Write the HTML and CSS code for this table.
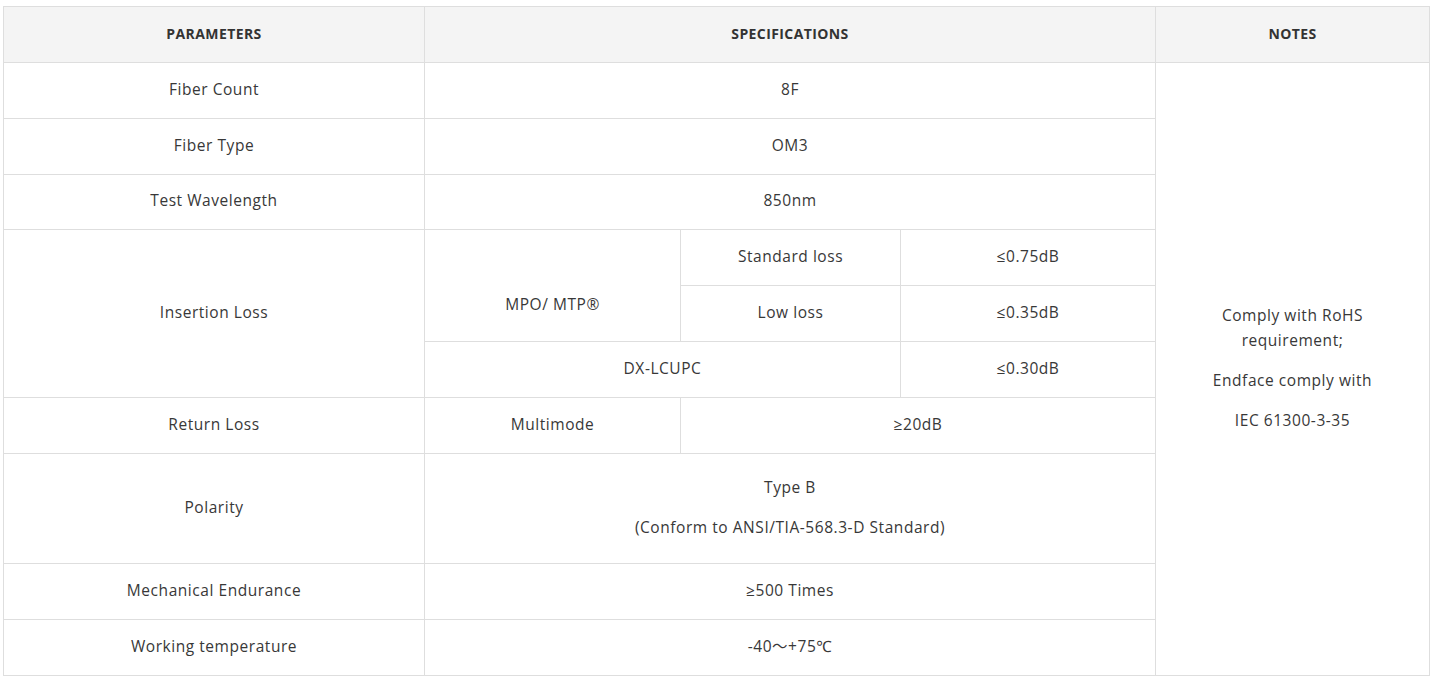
FILE: index.html
```html
<!DOCTYPE html>
<html lang="en">
<head>
<meta charset="utf-8">
<title>Specifications</title>
<link rel="stylesheet" href="styles.css">
</head>
<body>
<table class="spec">
  <colgroup>
    <col class="c1">
    <col class="c2">
    <col class="c3">
    <col class="c4">
    <col class="c5">
  </colgroup>
  <thead>
    <tr>
      <th>PARAMETERS</th>
      <th colspan="3">SPECIFICATIONS</th>
      <th>NOTES</th>
    </tr>
  </thead>
  <tbody>
    <tr>
      <td>Fiber Count</td>
      <td colspan="3">8F</td>
      <td rowspan="10" class="notes">
        <p>Comply with RoHS<br>requirement;</p>
        <p>Endface comply with</p>
        <p>IEC 61300-3-35</p>
      </td>
    </tr>
    <tr>
      <td>Fiber Type</td>
      <td colspan="3">OM3</td>
    </tr>
    <tr class="short">
      <td>Test Wavelength</td>
      <td colspan="3">850nm</td>
    </tr>
    <tr>
      <td rowspan="3">Insertion Loss</td>
      <td rowspan="2" class="low">MPO/ MTP®</td>
      <td>Standard loss</td>
      <td>≤0.75dB</td>
    </tr>
    <tr>
      <td>Low loss</td>
      <td>≤0.35dB</td>
    </tr>
    <tr>
      <td colspan="2">DX-LCUPC</td>
      <td>≤0.30dB</td>
    </tr>
    <tr>
      <td>Return Loss</td>
      <td>Multimode</td>
      <td colspan="2">≥20dB</td>
    </tr>
    <tr class="tall">
      <td>Polarity</td>
      <td colspan="3">
        <p>Type B</p>
        <p>(Conform to ANSI/TIA-568.3-D Standard)</p>
      </td>
    </tr>
    <tr>
      <td>Mechanical Endurance</td>
      <td colspan="3">≥500 Times</td>
    </tr>
    <tr>
      <td>Working temperature</td>
      <td colspan="3">-40～+75℃</td>
    </tr>
  </tbody>
</table>
</body>
</html>
```
FILE: styles.css
```css
html, body {
  margin: 0;
  padding: 0;
  background: #fff;
}
body {
  padding: 6px 0 0 3px;
  font-family: "Open Sans", "Noto Sans", "Noto Sans CJK SC", sans-serif;
  font-size: 15.5px;
  letter-spacing: 0.55px;
  color: #383838;
}
.spec {
  border-collapse: collapse;
  table-layout: fixed;
  width: 1426px;
}
.c1 { width: 421px; }
.c2 { width: 256px; }
.c3 { width: 220px; }
.c4 { width: 255px; }
.c5 { width: 274px; }
.spec tr {
  height: 56px;
}
.spec tr.short {
  height: 55px;
}
.spec tr.tall {
  height: 110px;
}
.spec th,
.spec td {
  border: 1px solid #dedede;
  text-align: center;
  vertical-align: middle;
  padding: 0 10px 3px;
  line-height: 25px;
}
.spec td.low {
  padding-top: 40px;
}
.spec th {
  background: #f4f4f4;
  font-weight: 700;
  font-size: 14px;
  letter-spacing: 0.4px;
  color: #333;
}
.spec td p {
  margin: 0;
}
.spec td p + p {
  margin-top: 15px;
}
```
